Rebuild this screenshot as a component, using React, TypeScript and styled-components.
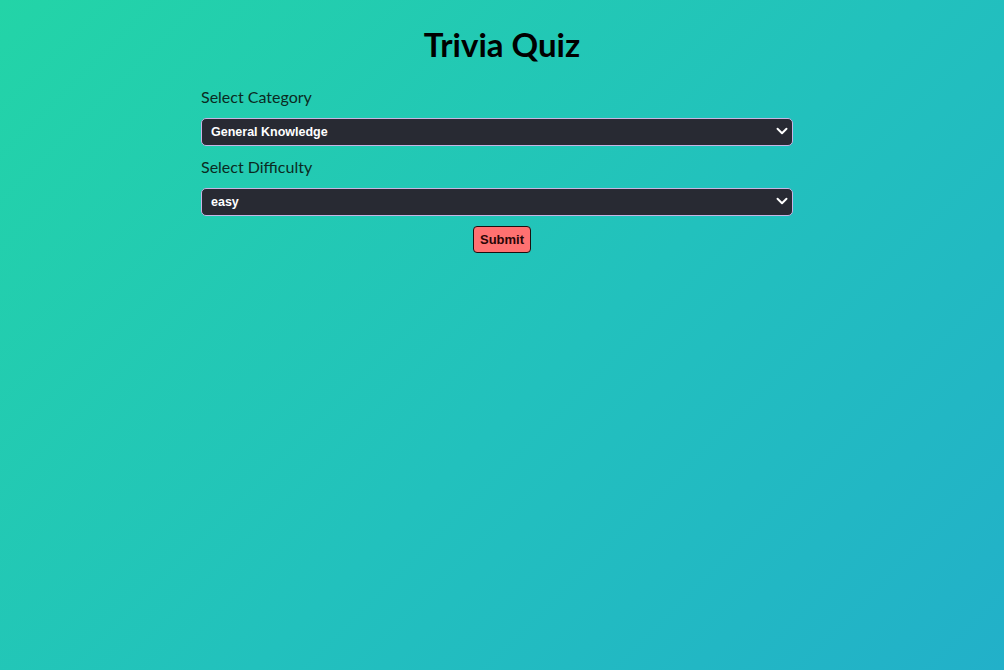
import React from "react";
import styled, { createGlobalStyle } from "styled-components";
import { ChevronDown } from "lucide-react";

const Global = createGlobalStyle`
  html, body { margin: 0; padding: 0; }
  body {
    min-height: 670px;
    background: linear-gradient(135deg, #23d4a7 0%, #22c1bd 55%, #22b0c9 100%);
    font-family: Lato, "Open Sans", sans-serif;
  }
`;

const Page = styled.div`
  min-height: 670px;
  display: flex;
  flex-direction: column;
  align-items: center;
  padding-top: 25px;
  box-sizing: border-box;
`;

const Title = styled.h1`
  margin: 0 0 24px;
  font-size: 33px;
  line-height: 38px;
  font-weight: 700;
  color: #000;
`;

const Form = styled.form`
  width: 592px;
  display: flex;
  flex-direction: column;
  margin-left: -10px;
`;

const Label = styled.label`
  font-size: 16px;
  line-height: 19px;
  color: #0b2a22;
  margin-bottom: 12px;
`;

const SelectWrap = styled.div<{ $gap: number }>`
  position: relative;
  margin-bottom: ${(p) => p.$gap}px;
`;

const Select = styled.select`
  appearance: none;
  width: 100%;
  height: 28px;
  box-sizing: border-box;
  border: 1px solid #c7b4e4;
  border-radius: 5px;
  background: #282a33;
  color: #fff;
  font-family: "Liberation Sans", Arial, sans-serif;
  font-weight: 700;
  font-size: 12.5px;
  padding: 0 0 0 9px;
  outline: none;
`;

const Arrow = styled.span`
  position: absolute;
  right: 2px;
  top: 4px;
  color: #fff;
  display: flex;
  pointer-events: none;
`;

const ButtonRow = styled.div`
  display: flex;
  justify-content: center;
  margin-left: 10px;
`;

const Submit = styled.button`
  height: 27px;
  padding: 0 6px;
  background: #ff7171;
  border: 1px solid #1c1010;
  border-radius: 4px;
  color: #2a0606;
  font-family: "Liberation Sans", Arial, sans-serif;
  font-weight: 700;
  font-size: 13px;
  cursor: pointer;
`;

export default function App() {
  return (
    <>
      <Global />
      <Page>
        <Title>Trivia Quiz</Title>
        <Form onSubmit={(e) => e.preventDefault()}>
          <Label>Select Category</Label>
          <SelectWrap $gap={11}>
            <Select defaultValue="9">
              <option value="9">General Knowledge</option>
              <option value="10">Entertainment: Books</option>
              <option value="11">Entertainment: Film</option>
            </Select>
            <Arrow>
              <ChevronDown size={18} strokeWidth={2.6} />
            </Arrow>
          </SelectWrap>
          <Label>Select Difficulty</Label>
          <SelectWrap $gap={10}>
            <Select defaultValue="easy">
              <option value="easy">easy</option>
              <option value="medium">medium</option>
              <option value="hard">hard</option>
            </Select>
            <Arrow>
              <ChevronDown size={18} strokeWidth={2.6} />
            </Arrow>
          </SelectWrap>
          <ButtonRow>
            <Submit type="submit">Submit</Submit>
          </ButtonRow>
        </Form>
      </Page>
    </>
  );
}
